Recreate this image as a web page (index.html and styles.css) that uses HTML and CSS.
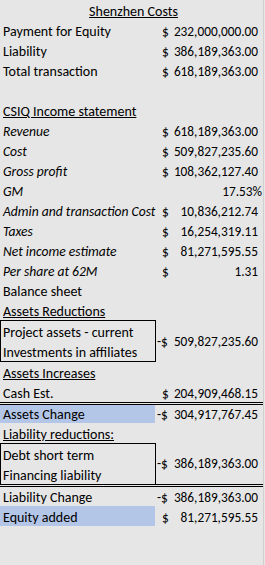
FILE: index.html
```html
<!DOCTYPE html>
<html>
<head>
<meta charset="utf-8">
<link rel="stylesheet" href="styles.css">
</head>
<body>
<div class="sheet">
  <div class="row title"><span class="u">Shenzhen Costs</span></div>
  <div class="row"><div class="lbl">Payment for Equity</div><div class="val"><span>$</span><span>232,000,000.00</span></div></div>
  <div class="row"><div class="lbl">Liability</div><div class="val"><span>$</span><span>386,189,363.00</span></div></div>
  <div class="row"><div class="lbl">Total transaction</div><div class="val"><span>$</span><span>618,189,363.00</span></div></div>
  <div class="row"></div>
  <div class="row"><div class="lbl"><span class="u">CSIQ Income statement</span></div></div>
  <div class="row it"><div class="lbl">Revenue</div><div class="val"><span>$</span><span>618,189,363.00</span></div></div>
  <div class="row it"><div class="lbl">Cost</div><div class="val"><span>$</span><span>509,827,235.60</span></div></div>
  <div class="row it"><div class="lbl">Gross profit</div><div class="val"><span>$</span><span>108,362,127.40</span></div></div>
  <div class="row it"><div class="lbl">GM</div><div class="val pct"><span>17.53%</span></div></div>
  <div class="row it"><div class="lbl">Admin and transaction Cost</div><div class="val"><span>$</span><span>10,836,212.74</span></div></div>
  <div class="row it"><div class="lbl">Taxes</div><div class="val"><span>$</span><span>16,254,319.11</span></div></div>
  <div class="row it"><div class="lbl">Net income estimate</div><div class="val"><span>$</span><span>81,271,595.55</span></div></div>
  <div class="row it"><div class="lbl">Per share at 62M</div><div class="val"><span>$</span><span>1.31</span></div></div>
  <div class="row"><div class="lbl">Balance sheet</div></div>
  <div class="row"><div class="lbl"><span class="u">Assets Reductions</span></div></div>
  <div class="group">
    <div class="box box1">
      <div class="line">Project assets - current</div>
      <div class="line">Investments in affiliates</div>
    </div>
    <div class="val neg"><span>-$</span><span>509,827,235.60</span></div>
  </div>
  <div class="row"><div class="lbl"><span class="u">Assets Increases</span></div></div>
  <div class="row"><div class="lbl">Cash Est.</div><div class="val"><span>$</span><span>204,909,468.15</span></div></div>
  <div class="row dbl first"><div class="lbl hl">Assets Change</div><div class="val neg"><span>-$</span><span>304,917,767.45</span></div></div>
  <div class="row"><div class="lbl"><span class="u">Liability reductions:</span></div></div>
  <div class="group">
    <div class="box box2">
      <div class="line">Debt short term</div>
      <div class="line">Financing liability</div>
    </div>
    <div class="val neg"><span>-$</span><span>386,189,363.00</span></div>
  </div>
  <div class="row dbl second"><div class="lbl">Liability Change</div><div class="val neg"><span>-$</span><span>386,189,363.00</span></div></div>
  <div class="row"><div class="lbl hl">Equity added</div><div class="val"><span>$</span><span>81,271,595.55</span></div></div>
</div>
</body>
</html>
```
FILE: styles.css
```css
html, body {
  margin: 0;
  padding: 0;
  background: #e6e6e6;
}
.sheet {
  width: 263px;
  height: 565px;
  border-right: 1px solid #d0d0d0;
  font-family: "Carlito", "Lato", "Liberation Sans", sans-serif;
  font-size: 14px;
  color: #000;
  display: flex;
  flex-direction: column;
}
.row {
  display: flex;
  height: 20px;
  flex: none;
}
.lbl {
  width: 155px;
  flex: none;
  box-sizing: border-box;
  padding: 3px 0 0 3px;
  line-height: 17px;
  white-space: nowrap;
}
.it .lbl { font-style: italic; font-size: 13.6px; }
.u { text-decoration: underline; }
.title {
  justify-content: center;
  padding: 3px 0 0 4px;
  box-sizing: border-box;
  line-height: 17px;
}
.val {
  flex: 1;
  display: flex;
  justify-content: space-between;
  padding: 3px 5px 0 7px;
  line-height: 17px;
  font-size: 13.3px;
  white-space: nowrap;
}
.val.neg { padding-left: 2px; }
.val.pct { justify-content: flex-end; padding-right: 1px; }
.hl { background: #b4c6e7; }
.group {
  display: flex;
  flex: none;
}
.box {
  width: 156px;
  box-sizing: border-box;
  border: 1px solid #000;
  flex: none;
}
.box2 { border-bottom: none; }
.line {
  height: 20px;
  box-sizing: border-box;
  padding: 3px 0 0 2px;
  line-height: 17px;
  white-space: nowrap;
}
.group .val {
  align-items: center;
  padding-top: 0;
  padding-left: 1px;
}
.dbl {
  border-top: 3px double #000;
}
.dbl.first { height: 18px; }
.dbl.first .lbl, .dbl.first .val { padding-top: 1px; }
.dbl.second { height: 19px; }
.dbl.second .lbl, .dbl.second .val { padding-top: 2px; }
```
